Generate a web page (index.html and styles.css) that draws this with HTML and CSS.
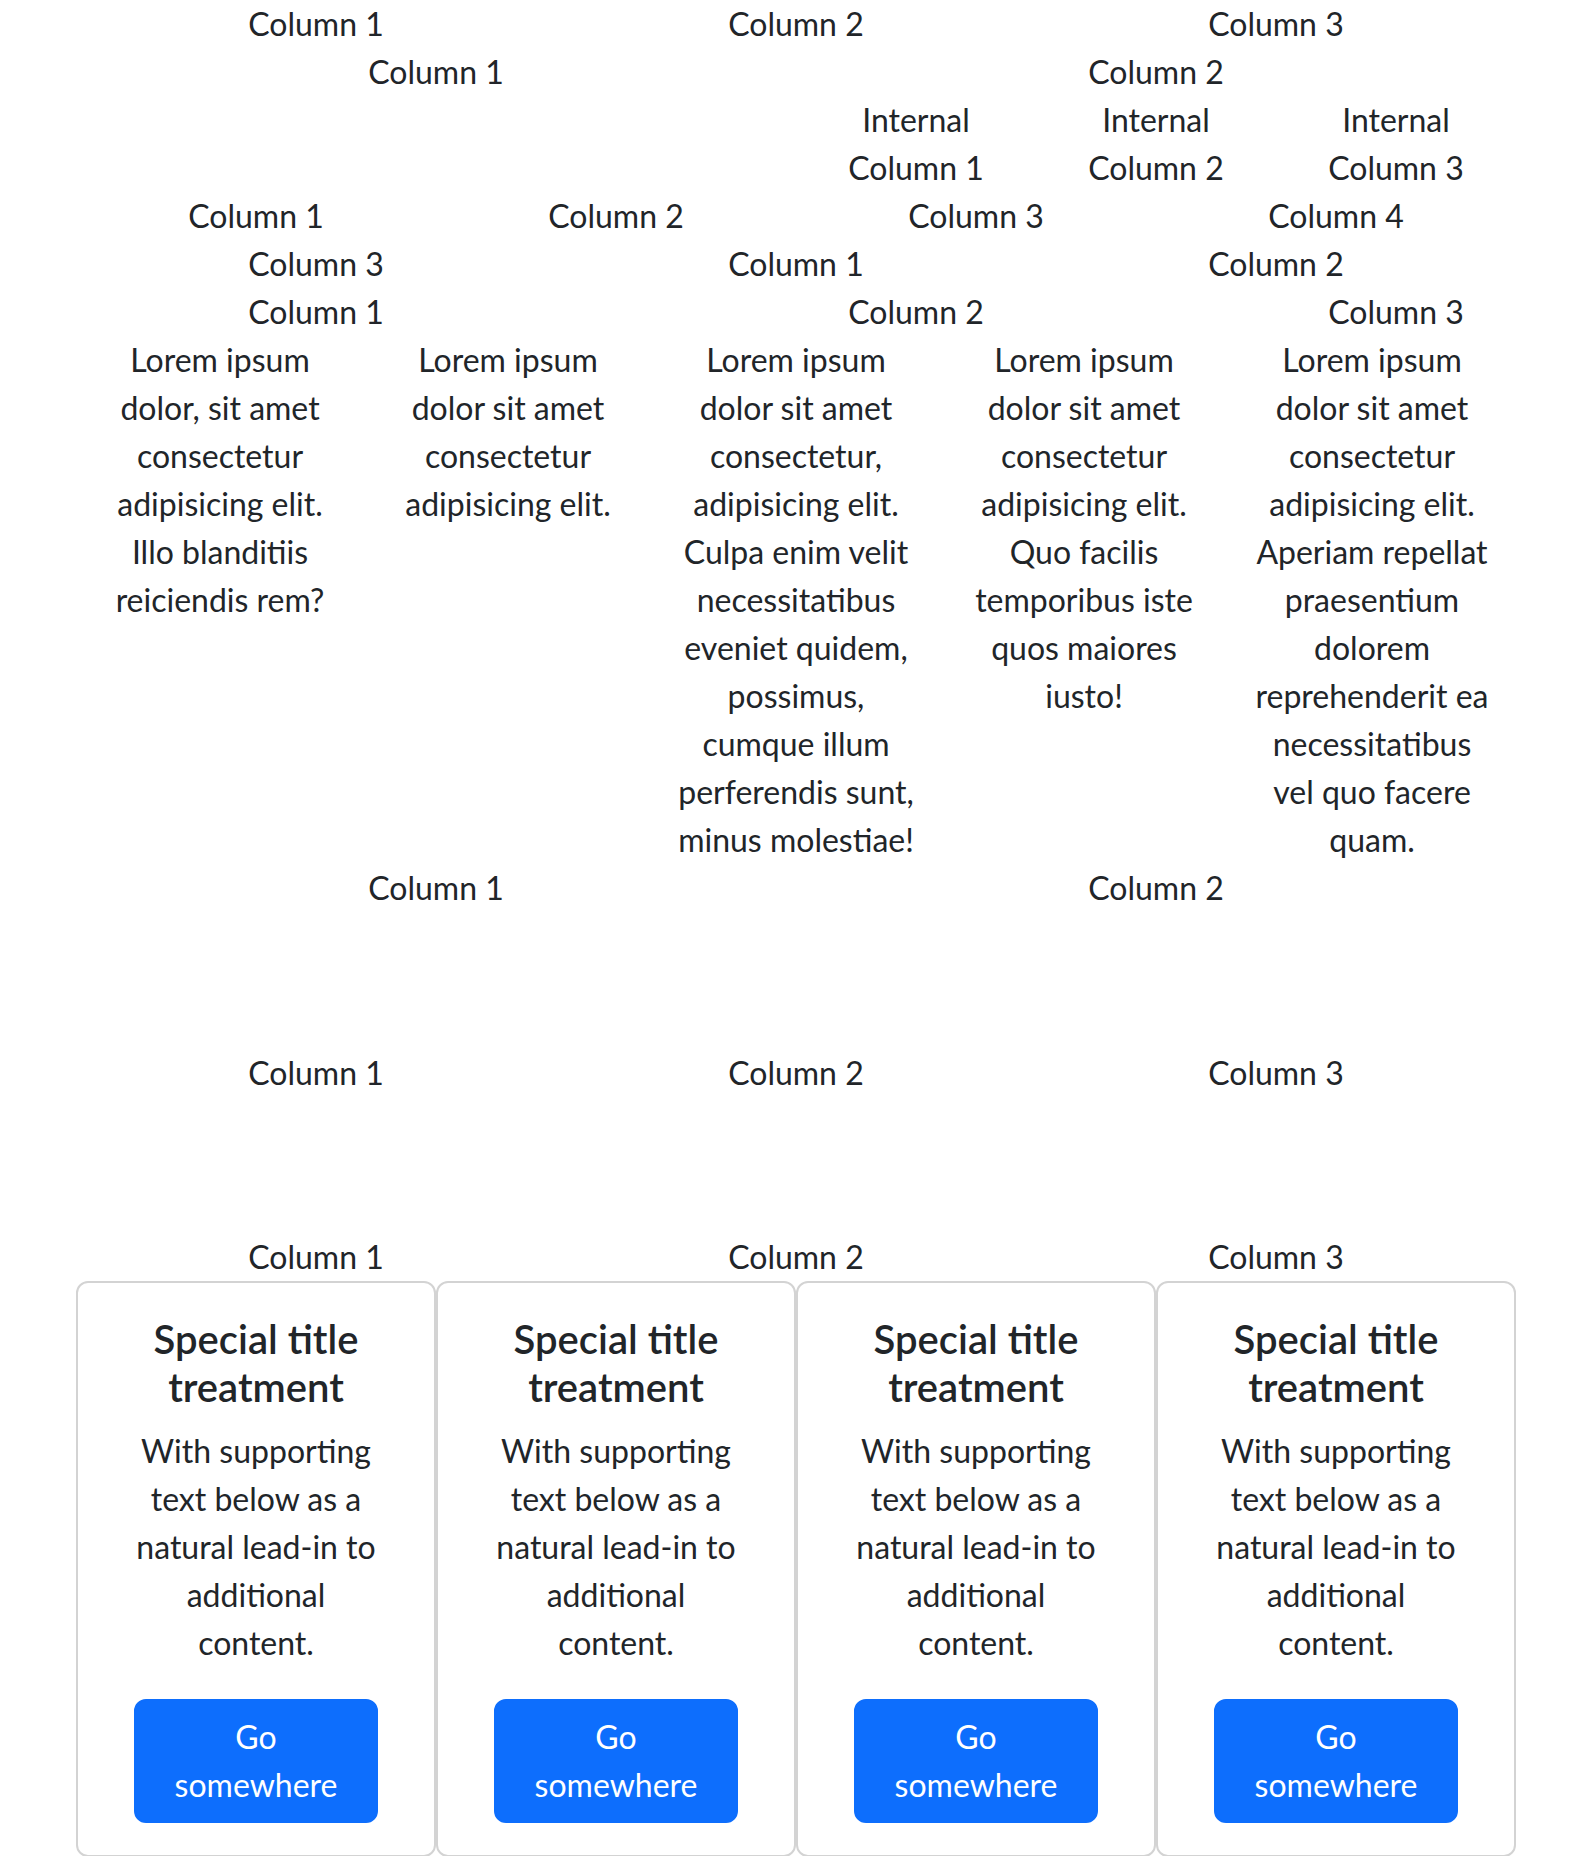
FILE: index.html
```html
<!DOCTYPE html>
<html lang="en">
<head>
<meta charset="utf-8">
<title>Grid</title>
<link rel="stylesheet" href="styles.css">
</head>
<body>
<div class="container">
  <div class="row">
    <div class="col col-4">Column 1</div>
    <div class="col col-4">Column 2</div>
    <div class="col col-4">Column 3</div>
  </div>
  <div class="row">
    <div class="col col-6">Column 1</div>
    <div class="col col-6">Column 2</div>
  </div>
  <div class="row">
    <div class="col col-6 offset-6">
      <div class="row nested">
        <div class="col col-4">Internal Column 1</div>
        <div class="col col-4">Internal Column 2</div>
        <div class="col col-4">Internal Column 3</div>
      </div>
    </div>
  </div>
  <div class="row">
    <div class="col col-3">Column 1</div>
    <div class="col col-3">Column 2</div>
    <div class="col col-3">Column 3</div>
    <div class="col col-3">Column 4</div>
  </div>
  <div class="row">
    <div class="col col-4 order-2">Column 1</div>
    <div class="col col-4 order-3">Column 2</div>
    <div class="col col-4 order-1">Column 3</div>
  </div>
  <div class="row">
    <div class="col col-4">Column 1</div>
    <div class="col col-6">Column 2</div>
    <div class="col col-2">Column 3</div>
  </div>
  <div class="row">
    <div class="col col-auto-5">Lorem ipsum dolor, sit amet consectetur adipisicing elit. Illo blanditiis reiciendis rem?</div>
    <div class="col col-auto-5">Lorem ipsum dolor sit amet consectetur adipisicing elit.</div>
    <div class="col col-auto-5">Lorem ipsum dolor sit amet consectetur, adipisicing elit. Culpa enim velit necessitatibus eveniet quidem, possimus, cumque illum perferendis sunt, minus molestiae!</div>
    <div class="col col-auto-5">Lorem ipsum dolor sit amet consectetur adipisicing elit. Quo facilis temporibus iste quos maiores iusto!</div>
    <div class="col col-auto-5">Lorem ipsum dolor sit amet consectetur adipisicing elit. Aperiam repellat praesentium dolorem reprehenderit ea necessitatibus vel quo facere quam.</div>
  </div>
  <div class="row tall align-start">
    <div class="col col-6">Column 1</div>
    <div class="col col-6">Column 2</div>
  </div>
  <div class="row tall align-center">
    <div class="col col-4">Column 1</div>
    <div class="col col-4">Column 2</div>
    <div class="col col-4">Column 3</div>
  </div>
  <div class="row tall align-end">
    <div class="col col-4">Column 1</div>
    <div class="col col-4">Column 2</div>
    <div class="col col-4">Column 3</div>
  </div>
  <div class="row cards">
    <div class="col-card">
      <div class="card">
        <div class="card-body">
          <h5 class="card-title">Special title treatment</h5>
          <p class="card-text">With supporting text below as a natural lead-in to additional content.</p>
          <a href="#" class="btn">Go somewhere</a>
        </div>
      </div>
    </div>
    <div class="col-card">
      <div class="card">
        <div class="card-body">
          <h5 class="card-title">Special title treatment</h5>
          <p class="card-text">With supporting text below as a natural lead-in to additional content.</p>
          <a href="#" class="btn">Go somewhere</a>
        </div>
      </div>
    </div>
    <div class="col-card">
      <div class="card">
        <div class="card-body">
          <h5 class="card-title">Special title treatment</h5>
          <p class="card-text">With supporting text below as a natural lead-in to additional content.</p>
          <a href="#" class="btn">Go somewhere</a>
        </div>
      </div>
    </div>
    <div class="col-card">
      <div class="card">
        <div class="card-body">
          <h5 class="card-title">Special title treatment</h5>
          <p class="card-text">With supporting text below as a natural lead-in to additional content.</p>
          <a href="#" class="btn">Go somewhere</a>
        </div>
      </div>
    </div>
  </div>
</div>
</body>
</html>
```

FILE: styles.css
```css
* { box-sizing: border-box; }

html, body {
  margin: 0;
  padding: 0;
  background: #fff;
}

body {
  font-family: Lato, "Liberation Sans", sans-serif;
  font-size: 32px;
  line-height: 48px;
  color: #212529;
  text-align: center;
}

.container {
  width: 1440px;
  margin: 0 auto;
}

.row {
  display: flex;
  flex-wrap: wrap;
}

.nested {
  margin: 0 -24px;
}

.col {
  padding: 0 24px;
  min-width: 0;
}

.col-2 { flex: 0 0 16.6667%; }
.col-3 { flex: 0 0 25%; }
.col-4 { flex: 0 0 33.3333%; }
.col-6 { flex: 0 0 50%; }
.col-auto-5 { flex: 0 0 20%; }
.offset-6 { margin-left: 50%; }

.order-1 { order: 1; }
.order-2 { order: 2; }
.order-3 { order: 3; }

.tall { height: 139px; }
.align-start { align-items: flex-start; }
.align-center { align-items: center; }
.align-end { align-items: flex-end; }

.cards { flex-wrap: nowrap; }

.col-card {
  flex: 0 0 25%;
}

.card {
  border: 2px solid #d3d3d3;
  border-radius: 12px;
  background: #fff;
}

.card-body {
  padding: 32px 56px;
}

.card-title {
  margin: 0 0 16px;
  font-size: 40px;
  line-height: 48px;
  font-weight: 600;
}

.card-text {
  margin: 0 0 32px;
}

.btn {
  display: inline-block;
  width: 100%;
  padding: 12px 24px;
  border: 2px solid #0d6efd;
  border-radius: 12px;
  background: #0d6efd;
  color: #fff;
  text-decoration: none;
  font-size: 32px;
  line-height: 48px;
}
```
